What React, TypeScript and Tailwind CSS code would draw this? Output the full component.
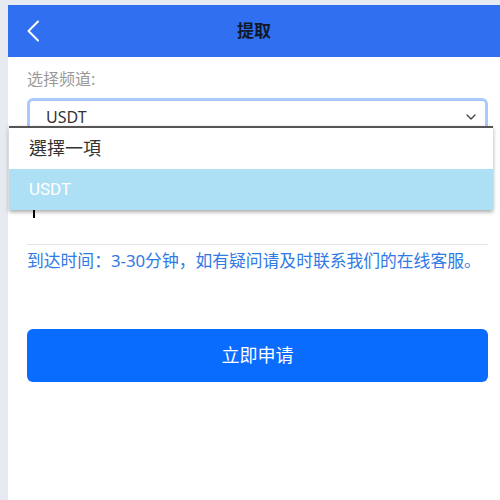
import { ChevronDown } from "lucide-react";

const font = { fontFamily: '"Noto Sans", "Noto Sans CJK SC", sans-serif' };

export default function App() {
  return (
    <div
      className="w-[500px] h-[500px] overflow-hidden bg-[#e8eaf2] pl-2 pt-[5px]"
      style={font}
    >
      <div className="relative h-full bg-white flex flex-col">
        <header className="relative h-[52px] bg-[#2f6ff0] flex items-center justify-center shrink-0">
          <button className="absolute left-[18px] top-[15px] text-white">
            <svg width="14" height="22" viewBox="0 0 14 22" fill="none">
              <path d="M12 1.5 L2.5 11 L12 20.5" stroke="currentColor" strokeWidth="2" strokeLinecap="round" strokeLinejoin="round" />
            </svg>
          </button>
          <h1 className="text-[17px] font-bold text-[#111827]">提取</h1>
        </header>

        <div className="pl-[19px] pr-[12px] flex flex-col">
          <p className="mt-[9px] text-[16px] leading-[26px] text-[#9a9a9a]">选择频道:</p>

          <div className="mt-[6px] h-[38px] rounded-[6px] border-[3px] border-[#a9c9fb] bg-white flex items-center justify-between pl-[16px] pr-[6px]">
            <span className="text-[16px] text-[#333]">USDT</span>
            <ChevronDown className="size-[16px] text-[#444]" strokeWidth={2} />
          </div>

          <div className="h-[109px] border-b border-[#e6e6e6] pl-[6px] pt-[68px]">
            <span className="block w-[2px] h-[14px] bg-black" />
          </div>

          <p className="mt-[5px] text-[16.8px] leading-[22px] text-[#2f7ae5] whitespace-nowrap">
            到达时间：3-30分钟，如有疑问请及时联系我们的在线客服。
          </p>

          <button className="mt-[57px] h-[53px] rounded-[6px] bg-[#0a6cff] text-white text-[18px]">
            立即申请
          </button>
        </div>

        <ul
          className="absolute left-px top-[121px] w-[484px] bg-white border-t-2 border-[#555] shadow-[0_2px_4px_rgba(0,0,0,0.35)]"
          style={{ fontFamily: '"Roboto", "Noto Sans CJK TC", sans-serif' }}
        >
          <li className="h-[41px] pl-[20px] flex items-center text-[18px] text-[#333]">選擇一項</li>
          <li className="h-[41px] pl-[20px] flex items-center text-[17px] text-white bg-[#ade0f5]">USDT</li>
        </ul>
      </div>
    </div>
  );
}
